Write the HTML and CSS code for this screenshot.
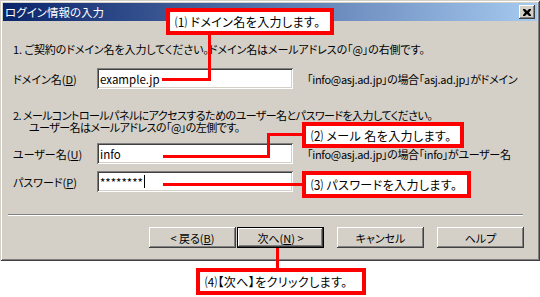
FILE: index.html
```html
<!DOCTYPE html>
<html lang="ja">
<head>
<meta charset="utf-8">
<title>ログイン情報の入力</title>
<link rel="stylesheet" href="styles.css">
</head>
<body>
<div class="stage">
  <div class="window">
    <div class="titlebar">
      <span class="title">ログイン情報の入力</span>
      <span class="close"><svg width="8" height="7" viewBox="0 0 8 7"><path d="M0 0h2l2 2 2-2h2v1l-2 2.5 2 2.5v1h-2l-2-2-2 2h-2v-1l2-2.5-2-2.5z" fill="#000"/></svg></span>
    </div>
    <div class="content">
      <p class="step step1">1. ご契約のドメイン名を入力してください。ドメイン名はメールアドレスの「@」の右側です。</p>
      <div class="field f-domain">
        <span class="label">ドメイン名(<u>D</u>)</span>
        <span class="input">example.jp</span>
        <span class="hint">「info@asj.ad.jp」の場合「asj.ad.jp」がドメイン</span>
      </div>
      <p class="step step2">2. メールコントロールパネルにアクセスするためのユーザー名とパスワードを入力してください。<br><span class="indent">ユーザー名はメールアドレスの「@」の左側です。</span></p>
      <div class="field f-user">
        <span class="label">ユーザー名(<u>U</u>)</span>
        <span class="input">info</span>
        <span class="hint">「info@asj.ad.jp」の場合「info」がユーザー名</span>
      </div>
      <div class="field f-pass">
        <span class="label">パスワード(<u>P</u>)</span>
        <span class="input">********<span class="caret"></span></span>
      </div>
      <div class="sep"></div>
      <div class="buttons">
        <span class="btn">&lt; 戻る(<u>B</u>)</span>
        <span class="btn default">次へ(<u>N</u>) &gt;</span>
        <span class="btn gap">キャンセル</span>
        <span class="btn gap">ヘルプ</span>
      </div>
    </div>
  </div>

  <div class="line l1v"></div>
  <div class="line l1h"></div>
  <div class="line l2a"></div>
  <div class="line l2b"></div>
  <div class="line l2c"></div>
  <div class="line l3"></div>
  <div class="line l4"></div>

  <div class="callout c1">⑴ ドメイン名を入力します。</div>
  <div class="callout c2">⑵ メール 名を入力します。</div>
  <div class="callout c3">⑶ パスワードを入力します。</div>
  <div class="callout c4">⑷【次へ】をクリックします。</div>
</div>
</body>
</html>
```
FILE: styles.css
```css
html, body {
  margin: 0;
  padding: 0;
  background: #ffffff;
}
body {
  font-family: "Noto Sans CJK JP", "Noto Sans", sans-serif;
  font-size: 11px;
  font-feature-settings: "palt";
  color: #000;
}
.stage {
  position: relative;
  width: 540px;
  height: 297px;
  overflow: hidden;
}
.window {
  box-sizing: border-box;
  width: 540px;
  height: 261px;
  padding: 3px;
  background: #d4d0c8;
  box-shadow: inset 1px 1px #d4d0c8, inset -1px -1px #404040, inset 2px 2px #ffffff, inset -2px -2px #808080;
}
.titlebar {
  height: 18px;
  display: flex;
  align-items: center;
  justify-content: space-between;
  padding-left: 2px;
  padding-right: 2px;
  background: linear-gradient(to right, #0a246a, #a6caf0);
}
.title {
  color: #fff;
  font-size: 11.5px;
  line-height: 18px;
}
.close {
  box-sizing: border-box;
  width: 16px;
  height: 14px;
  display: flex;
  align-items: center;
  justify-content: center;
  background: #d4d0c8;
  box-shadow: inset -1px -1px #404040, inset 1px 1px #ffffff, inset -2px -2px #808080;
}
.content {
  padding: 0 0 0 10px;
}
.step {
  margin: 0;
  line-height: 14px;
  white-space: nowrap;
}
.step1 {
  margin-top: 21px;
  letter-spacing: -0.1px;
}
.step2 {
  margin-top: 20px;
  line-height: 12px;
  letter-spacing: -0.55px;
}
.indent {
  padding-left: 16px;
}
.field {
  display: flex;
  align-items: center;
  height: 21px;
}
.f-domain { margin-top: 12px; }
.f-user { margin-top: 10px; }
.f-pass { margin-top: 7px; }
.label {
  width: 84px;
  flex: none;
}
.input {
  box-sizing: border-box;
  width: 196px;
  height: 21px;
  flex: none;
  display: flex;
  align-items: center;
  padding-left: 3px;
  font-size: 11.5px;
  background: #fff;
  box-shadow: inset 1px 1px #808080, inset -1px -1px #ffffff, inset 2px 2px #404040, inset -2px -2px #d4d0c8;
}
.caret {
  display: inline-block;
  width: 1px;
  height: 13px;
  background: #000;
  margin-left: 1px;
}
.hint {
  margin-left: 14px;
  white-space: nowrap;
  letter-spacing: -0.3px;
}
.sep {
  margin: 22px 14px 0 -5px;
  border-top: 1px solid #808080;
  border-bottom: 1px solid #ffffff;
  height: 0;
}
.buttons {
  display: flex;
  justify-content: flex-end;
  margin-top: 11px;
  padding-right: 13px;
}
.btn {
  box-sizing: border-box;
  width: 87px;
  height: 21px;
  display: flex;
  align-items: center;
  justify-content: center;
  background: #d4d0c8;
  box-shadow: inset -1px -1px #404040, inset 1px 1px #ffffff, inset -2px -2px #808080;
  margin-left: 1px;
}
.btn.default {
  box-shadow: inset 0 0 0 1px #000, inset -2px -2px #404040, inset 2px 2px #ffffff, inset -3px -3px #808080;
}
.btn.gap {
  margin-left: 13px;
}
.line {
  position: absolute;
  background: #ff0000;
}
.l1v { left: 208px; top: 34px; width: 3px; height: 47px; }
.l1h { left: 162px; top: 78px; width: 49px; height: 3px; }
.l2a { left: 163px; top: 155px; width: 107px; height: 3px; }
.l2b { left: 267px; top: 133px; width: 3px; height: 25px; }
.l2c { left: 267px; top: 133px; width: 36px; height: 3px; }
.l3 { left: 163px; top: 183px; width: 140px; height: 3px; }
.l4 { left: 276px; top: 248px; width: 3px; height: 21px; }
.callout {
  position: absolute;
  box-sizing: border-box;
  border: 4px solid #ff0000;
  background: #fff;
  display: flex;
  align-items: center;
  padding-left: 5px;
  font-size: 12px;
  letter-spacing: 0.4px;
  white-space: nowrap;
}
.c1 { left: 166px; top: 8px; width: 168px; height: 27px; }
.c2 { left: 302px; top: 122px; width: 162px; height: 26px; }
.c3 { left: 302px; top: 171px; width: 169px; height: 27px; }
.c4 { left: 196px; top: 268px; width: 170px; height: 27px; }
```
